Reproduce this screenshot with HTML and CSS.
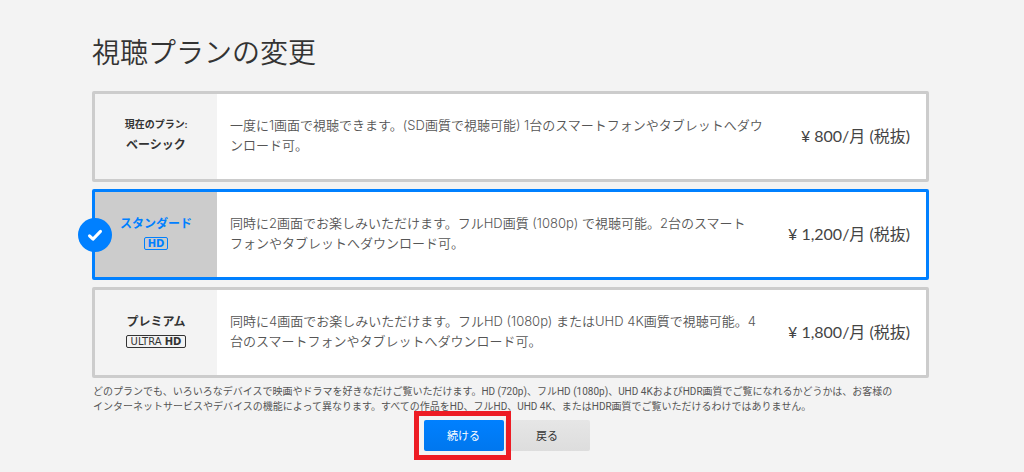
FILE: index.html
```html
<!DOCTYPE html>
<html lang="ja">
<head>
<meta charset="utf-8">
<meta name="viewport" content="width=device-width, initial-scale=1">
<title>視聴プランの変更</title>
<link rel="stylesheet" href="styles.css">
</head>
<body>
<main class="page">
  <h1 class="title">視聴プランの変更</h1>
  <form class="form">
    <div class="plans">
      <label class="plan">
        <input class="plan-radio" type="radio" name="plan" value="basic">
        <span class="plan-head">
          <span class="plan-current">現在のプラン:</span>
          <span class="plan-name">ベーシック</span>
        </span>
        <span class="plan-text">一度に1画面で視聴できます。(SD画質で視聴可能) 1台のスマートフォンやタブレットへダウ<br>ンロード可。</span>
        <span class="plan-price">¥ 800/月 (税抜)</span>
      </label>
      <label class="plan">
        <input class="plan-radio" type="radio" name="plan" value="standard" checked>
        <span class="plan-check">
          <svg class="check-icon" viewBox="0 0 16 16" aria-hidden="true"><path d="M2.5 8.8 6 12.1 13.5 4.4" fill="none" stroke="#fff" stroke-width="3" stroke-linecap="round" stroke-linejoin="round"/></svg>
        </span>
        <span class="plan-head">
          <span class="plan-name">スタンダード</span>
          <span class="badge badge-hd">HD</span>
        </span>
        <span class="plan-text">同時に2画面でお楽しみいただけます。フルHD画質 (1080p) で視聴可能。2台のスマート<br>フォンやタブレットへダウンロード可。</span>
        <span class="plan-price">¥ 1,200/月 (税抜)</span>
      </label>
      <label class="plan">
        <input class="plan-radio" type="radio" name="plan" value="premium">
        <span class="plan-head">
          <span class="plan-name">プレミアム</span>
          <span class="badge">ULTRA <b>HD</b></span>
        </span>
        <span class="plan-text">同時に4画面でお楽しみいただけます。フルHD (1080p) またはUHD 4K画質で視聴可能。4<br>台のスマートフォンやタブレットへダウンロード可。</span>
        <span class="plan-price">¥ 1,800/月 (税抜)</span>
      </label>
    </div>
    <p class="note">どのプランでも、いろいろなデバイスで映画やドラマを好きなだけご覧いただけます。HD (720p)、フルHD (1080p)、UHD 4KおよびHDR画質でご覧になれるかどうかは、お客様の<br>インターネットサービスやデバイスの機能によって異なります。すべての作品をHD、フルHD、UHD 4K、またはHDR画質でご覧いただけるわけではありません。</p>
    <div class="actions">
      <button class="btn btn-primary" type="button">続ける</button>
      <button class="btn btn-back" type="button">戻る</button>
    </div>
  </form>
</main>
</body>
</html>
```
FILE: styles.css
```css
* {
  box-sizing: border-box;
}

body {
  margin: 0;
  background: #f3f3f3;
  color: #333;
  font-family: Lato, "Noto Sans CJK JP", sans-serif;
}

.page {
  padding: 32px 95px 20px 92px;
}

.title {
  margin: 0 0 19px;
  font-size: 28px;
  line-height: 40px;
  font-weight: 350;
}

.plans {
  display: grid;
  gap: 7px;
}

.plan {
  position: relative;
  display: flex;
  min-height: 91px;
  border: 3px solid #ccc;
  border-radius: 2px;
  background: #fff;
  cursor: pointer;
}

.plan:has(:checked) {
  border-color: #0080ff;
}

.plan-radio {
  position: absolute;
  opacity: 0;
}

.plan-head {
  display: flex;
  flex: 0 0 122px;
  flex-direction: column;
  align-items: center;
  justify-content: center;
  gap: 4px;
  padding-bottom: 4px;
  background: #f3f3f3;
  font-weight: 700;
}

.plan:has(:checked) .plan-head {
  background: #ccc;
  color: #0080ff;
}

.plan-current {
  font-size: 10px;
  line-height: 16px;
}

.plan-name {
  font-size: 12px;
  line-height: 18px;
}

.badge {
  padding: 0 4px;
  border: 1px solid currentColor;
  border-radius: 2px;
  font: 400 10px/11px "DejaVu Sans", sans-serif;
  white-space: nowrap;
}

.badge-hd {
  padding: 0 3px;
  font-weight: 700;
}

.plan-check {
  position: absolute;
  top: 50%;
  left: -17px;
  display: grid;
  place-items: center;
  width: 34px;
  height: 34px;
  margin-top: -17px;
  border-radius: 50%;
  background: #0080ff;
}

.check-icon {
  width: 16px;
  height: 16px;
}

.plan-text {
  flex: 1;
  align-self: center;
  padding: 0 0 3px 13px;
  color: #555;
  font-family: Inter, "Noto Sans CJK JP", sans-serif;
  font-size: 13px;
  line-height: 20px;
  font-weight: 350;
  white-space: nowrap;
}

.plan-price {
  align-self: center;
  padding: 0 16px 2px 0;
  color: #444;
  font-size: 16px;
  line-height: 24px;
  white-space: nowrap;
}

.note {
  margin: 6px 0 0 1px;
  color: #555;
  font-family: Roboto, "Noto Sans CJK JP", sans-serif;
  font-size: 10px;
  line-height: 15px;
  white-space: nowrap;
}

.actions {
  display: flex;
  justify-content: center;
  gap: 1px;
  margin-top: 6px;
  padding-right: 8px;
}

.btn {
  height: 31px;
  padding: 0 0 2px;
  border: 0;
  border-radius: 2px;
  background: linear-gradient(#e6e6e6, #ddd);
  color: #333;
  font: inherit;
  font-size: 11px;
}

.btn-primary {
  position: relative;
  z-index: 1;
  width: 80px;
  background: linear-gradient(#0080ff, #0077ee);
  color: #fff;
}

.btn-primary::after {
  content: "";
  position: absolute;
  inset: -9px -7px -9px -10px;
  border: 5px solid #ed1c24;
}

.btn-back {
  width: 85px;
}
```
